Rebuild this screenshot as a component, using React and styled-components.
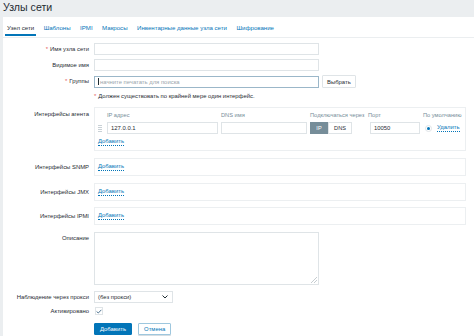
import React from "react";
import styled, { createGlobalStyle } from "styled-components";

const FS = "5.9px";

const Global = createGlobalStyle`
  * { box-sizing: border-box; }
  html, body { margin: 0; padding: 0; }
  body {
    background: #ebeef0;
    font-family: "Liberation Sans", Arial, sans-serif;
    color: #1f2c33;
    width: 474px;
    height: 336px;
    overflow: hidden;
  }
`;

const Header = styled.header`
  height: 17px;
  padding: 1px 0 0 3px;
  background: #ebeef0;
`;

const Title = styled.h1`
  margin: 0;
  font-size: 10.6px;
  font-weight: normal;
  line-height: 13px;
  color: #1f2c33;
`;

const Main = styled.main`
  margin-left: 3px;
  background: #ffffff;
  height: 319px;
`;

const TabBar = styled.nav`
  display: flex;
  gap: 5.5px;
  height: 21px;
  padding: 0 0 0 2px;
  border-bottom: 1px solid #ebeef0;
`;

const Tab = styled.div`
  display: flex;
  align-items: center;
  padding: 4px 2px 0;
  font-size: 6.1px;
  color: ${(p) => (p.$active ? "#1f2c33" : "#0275b8")};
  border-bottom: 2px solid ${(p) => (p.$active ? "#0275b8" : "transparent")};
  margin-bottom: 1px;
  white-space: nowrap;
`;

const Form = styled.div`
  display: flex;
  flex-direction: column;
  padding-top: 5px;
`;

const Row = styled.div`
  display: grid;
  grid-template-columns: 86px 1fr;
  column-gap: 5px;
  margin-top: ${(p) => p.$mt ?? 6}px;
  align-items: start;
`;

const Label = styled.div`
  text-align: right;
  font-size: ${FS};
  line-height: ${(p) => p.$lh ?? 12}px;
  padding-top: ${(p) => p.$pt ?? 0}px;
  color: #1f2c33;
  white-space: nowrap;
`;

const Req = styled.span`
  color: #e45959;
  margin-right: 2px;
`;

const Field = styled.div`
  display: flex;
  align-items: center;
  gap: 3px;
`;

const Input = styled.div`
  width: ${(p) => p.$w}px;
  height: 12px;
  border: 1px solid #dfe4e7;
  background: #fff;
  font-size: ${FS};
  line-height: 10px;
  padding: 0 3px;
  color: ${(p) => (p.$ph ? "#9aa5ab" : "#1f2c33")};
  margin-left: ${(p) => p.$ml ?? 0}px;
  white-space: nowrap;
  overflow: hidden;
`;

const FocusInput = styled(Input)`
  border-color: #9bb7c9;
`;

const Caret = styled.span`
  display: inline-block;
  width: 1px;
  height: 7px;
  background: #1f2c33;
  vertical-align: middle;
  margin-right: 1px;
`;

const Button = styled.div`
  height: ${(p) => p.$h ?? 13}px;
  padding: 0 ${(p) => p.$px ?? 5}px;
  display: flex;
  align-items: center;
  justify-content: center;
  font-size: ${FS};
  border: 1px solid ${(p) => (p.$primary ? "#0275b8" : "#dfe4e7")};
  background: ${(p) => (p.$primary ? "#0275b8" : "#fff")};
  color: ${(p) => (p.$primary ? "#fff" : "#1f2c33")};
  border-radius: 1px;
`;

const OutlineButton = styled(Button)`
  border-color: #9ec7de;
  color: #0275b8;
  box-shadow: 0 1px 0 #d5dde2;
`;

const Note = styled.div`
  font-size: ${FS};
  line-height: 9px;
  color: #1f2c33;
`;

const Box = styled.div`
  width: 372px;
  border: 1px solid #eceff1;
  padding: ${(p) => p.$pad ?? "3px 3px"};
  background: #fff;
`;

const IfaceGrid = styled.div`
  display: grid;
  grid-template-columns: 6px 111px 86px 55px 52px 1fr;
  column-gap: 3px;
  row-gap: 3px;
  align-items: center;
`;

const ColHead = styled.div`
  font-size: 5.7px;
  line-height: 8px;
  color: #768d99;
  white-space: nowrap;
  grid-column: ${(p) => p.$col ?? "auto"};
`;

const Handle = styled.div`
  width: 4px;
  height: 7px;
  background: repeating-linear-gradient(
    to bottom,
    #c9d1d6 0 1px,
    transparent 1px 2px
  );
`;

const Toggle = styled.div`
  display: flex;
  width: 42px;
  height: 12px;
`;

const ToggleOpt = styled.div`
  flex: ${(p) => (p.$active ? "0 0 18px" : "1")};
  display: flex;
  align-items: center;
  justify-content: center;
  font-size: 5.6px;
  background: ${(p) => (p.$active ? "#768d99" : "#fff")};
  color: ${(p) => (p.$active ? "#fff" : "#1f2c33")};
  border: 1px solid ${(p) => (p.$active ? "#768d99" : "#dfe4e7")};
`;

const DefaultCell = styled.div`
  display: flex;
  align-items: center;
  gap: 5px;
  padding-left: 2px;
`;

const Radio = styled.div`
  width: 7px;
  height: 7px;
  border-radius: 50%;
  border: 1px solid #dfe4e7;
  display: flex;
  align-items: center;
  justify-content: center;
  &::after {
    content: "";
    width: 3px;
    height: 3px;
    border-radius: 50%;
    background: #0275b8;
  }
`;

const Link = styled.span`
  font-size: ${FS};
  color: #0275b8;
  border-bottom: 1px dotted #0275b8;
  line-height: 7px;
`;

const AddLine = styled.div`
  padding: ${(p) => (p.$tight ? "0" : "2px 0 0 0")};
  height: ${(p) => (p.$tight ? 16 : 13)}px;
  display: flex;
  align-items: center;
`;

const TextArea = styled.div`
  width: 225px;
  height: 53px;
  border: 1px solid #dfe4e7;
  position: relative;
`;

const Grip = styled.svg`
  position: absolute;
  right: 1px;
  bottom: 1px;
`;

const Select = styled.div`
  width: 79px;
  height: 12px;
  border: 1px solid #dfe4e7;
  display: flex;
  align-items: center;
  justify-content: space-between;
  padding: 0 4px 0 3px;
  font-size: ${FS};
  color: #1f2c33;
`;

const Check = styled.div`
  width: 8px;
  height: 8px;
  border: 1px solid #dfe4e7;
  display: flex;
  align-items: center;
  justify-content: center;
  margin-left: 1px;
`;

const Actions = styled.div`
  display: flex;
  gap: 6px;
`;

const EmptyIface = ({ label, mt }) => (
  <Row $mt={mt}>
    <Label $lh={18}>{label}</Label>
    <Box $pad="0 3px">
      <AddLine $tight>
        <Link>Добавить</Link>
      </AddLine>
    </Box>
  </Row>
);

export default function App() {
  return (
    <>
      <Global />
      <Header>
        <Title>Узлы сети</Title>
      </Header>
      <Main>
        <TabBar>
          <Tab $active>Узел сети</Tab>
          <Tab>Шаблоны</Tab>
          <Tab>IPMI</Tab>
          <Tab>Макросы</Tab>
          <Tab>Инвентарные данные узла сети</Tab>
          <Tab>Шифрование</Tab>
        </TabBar>
        <Form>
          <Row $mt={0}>
            <Label><Req>*</Req>Имя узла сети</Label>
            <Field><Input $w={225} /></Field>
          </Row>
          <Row $mt={4}>
            <Label>Видимое имя</Label>
            <Field><Input $w={225} /></Field>
          </Row>
          <Row $mt={4}>
            <Label><Req>*</Req>Группы</Label>
            <Field>
              <FocusInput $w={225} $ph><Caret />начните печатать для поиска</FocusInput>
              <Button $px={4}>Выбрать</Button>
            </Field>
          </Row>
          <Row $mt={4}>
            <Label $lh={9}></Label>
            <Note><Req>*</Req>Должен существовать по крайней мере один интерфейс.</Note>
          </Row>
          <Row $mt={6}>
            <Label $lh={8} $pt={3}>Интерфейсы агента</Label>
            <Box>
              <IfaceGrid>
                <ColHead $col="2">IP адрес</ColHead>
                <ColHead>DNS имя</ColHead>
                <ColHead>Подключаться через</ColHead>
                <ColHead>Порт</ColHead>
                <ColHead>По умолчанию</ColHead>
                <Handle />
                <Input $w={111}>127.0.0.1</Input>
                <Input $w={86} />
                <Toggle>
                  <ToggleOpt $active>IP</ToggleOpt>
                  <ToggleOpt>DNS</ToggleOpt>
                </Toggle>
                <Input $w={50} $ml={2}>10050</Input>
                <DefaultCell>
                  <Radio />
                  <Link>Удалить</Link>
                </DefaultCell>
              </IfaceGrid>
              <AddLine><Link>Добавить</Link></AddLine>
            </Box>
          </Row>
          <EmptyIface label="Интерфейсы SNMP" mt={7} />
          <EmptyIface label="Интерфейсы JMX" mt={7} />
          <EmptyIface label="Интерфейсы IPMI" mt={6} />
          <Row $mt={7}>
            <Label $lh={12}>Описание</Label>
            <TextArea>
              <Grip width="6" height="6" viewBox="0 0 6 6">
                <path d="M6 0 L0 6 M6 3 L3 6" stroke="#b8c0c5" strokeWidth="0.8" />
              </Grip>
            </TextArea>
          </Row>
          <Row $mt={6}>
            <Label>Наблюдение через прокси</Label>
            <Select>
              <span>(без прокси)</span>
              <svg width="6" height="4" viewBox="0 0 6 4">
                <path d="M0.5 0.5 L3 3 L5.5 0.5" fill="none" stroke="#1f2c33" strokeWidth="1" />
              </svg>
            </Select>
          </Row>
          <Row $mt={4}>
            <Label $lh={9}>Активировано</Label>
            <Check>
              <svg width="6" height="5" viewBox="0 0 6 5">
                <path d="M0.6 2.5 L2.3 4 L5.4 0.8" fill="none" stroke="#4f7390" strokeWidth="1" />
              </svg>
            </Check>
          </Row>
          <Row $mt={7}>
            <Label />
            <Actions>
              <Button $primary $h={12} $px={5}>Добавить</Button>
              <OutlineButton $h={12} $px={5}>Отмена</OutlineButton>
            </Actions>
          </Row>
        </Form>
      </Main>
    </>
  );
}
